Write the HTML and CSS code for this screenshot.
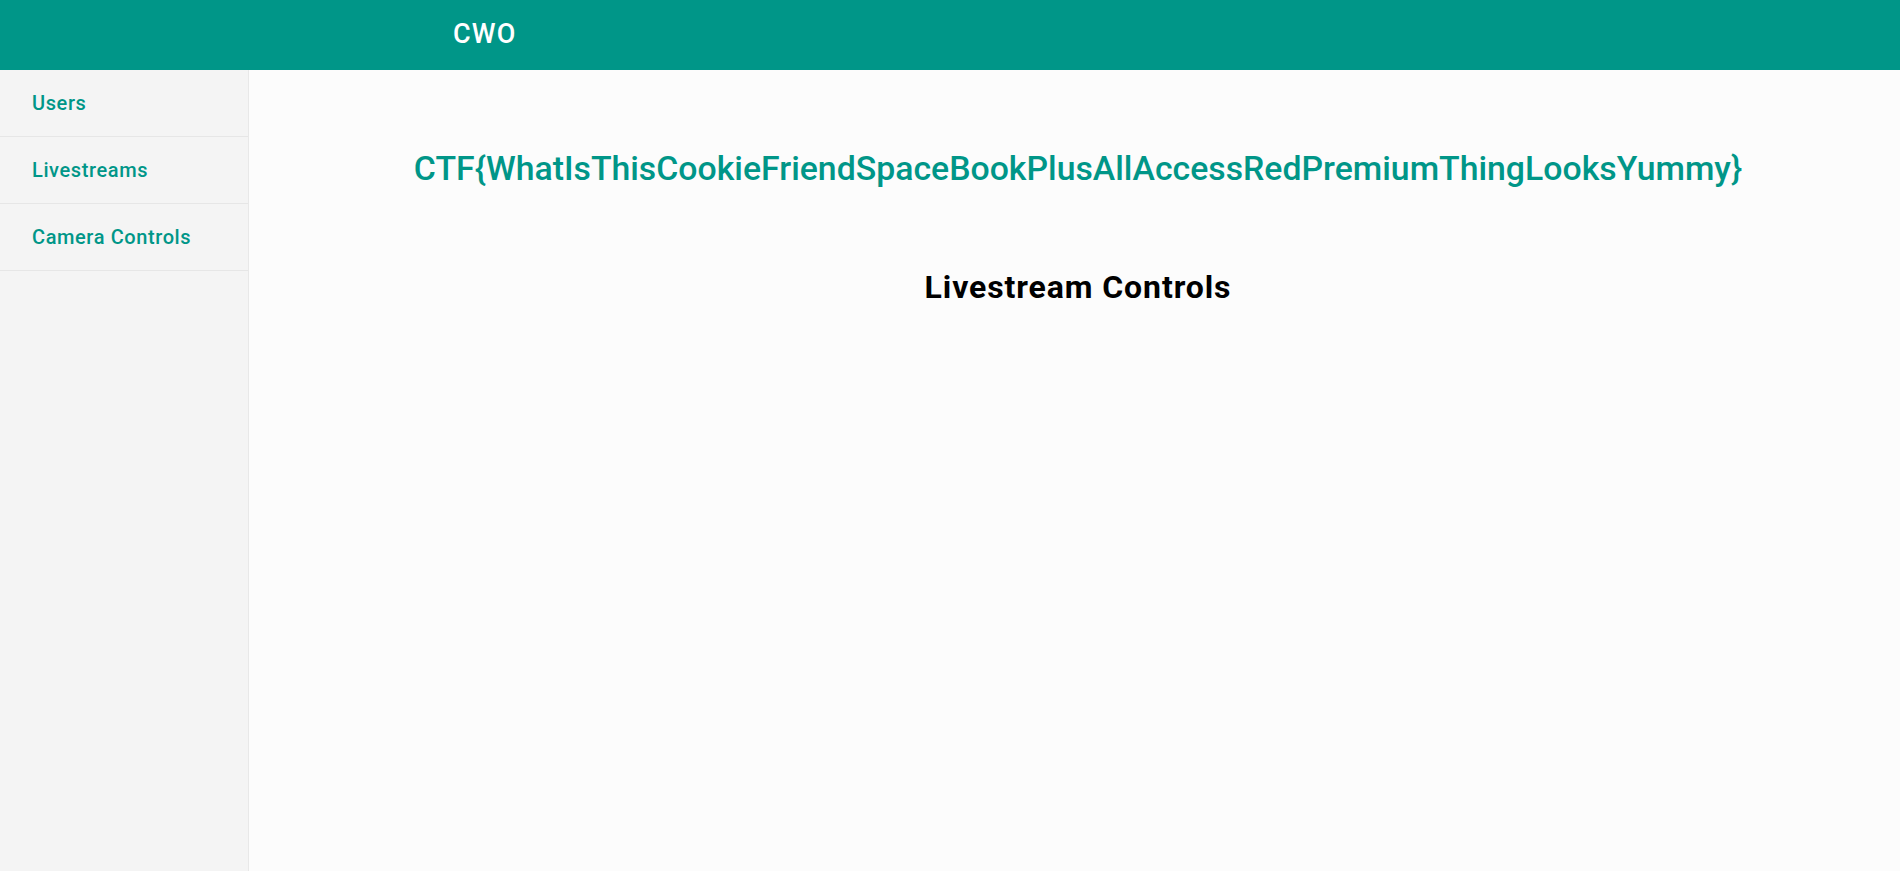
FILE: index.html
```html
<!DOCTYPE html>
<html>
<head>
<meta charset="utf-8">
<link rel="stylesheet" href="styles.css">
</head>
<body>
<header class="toolbar">
  <span class="brand">CWO</span>
</header>
<div class="layout">
  <nav class="sidenav">
    <a class="nav-item">Users</a>
    <a class="nav-item">Livestreams</a>
    <a class="nav-item">Camera Controls</a>
  </nav>
  <main class="content">
    <h2 class="flag">CTF{WhatIsThisCookieFriendSpaceBookPlusAllAccessRedPremiumThingLooksYummy}</h2>
    <h1 class="section-title">Livestream Controls</h1>
  </main>
</div>
</body>
</html>
```
FILE: styles.css
```css
html, body {
  margin: 0;
  padding: 0;
  height: 100%;
}
body {
  font-family: Roboto, "Liberation Sans", sans-serif;
  background: #fafafa;
  display: flex;
  flex-direction: column;
}
.toolbar {
  height: 70px;
  background: #009688;
  color: #ffffff;
  display: flex;
  align-items: center;
  padding-left: 453px;
  flex-shrink: 0;
}
.brand {
  font-size: 27px;
  font-weight: 500;
  letter-spacing: 1.2px;
  line-height: 1;
  padding-bottom: 1px;
}
.layout {
  flex: 1;
  display: flex;
}
.sidenav {
  width: 248px;
  background: #f4f4f4;
  border-right: 1px solid #e8e8e8;
  display: flex;
  flex-direction: column;
}
.nav-item {
  height: 66px;
  border-bottom: 1px solid #e6e6e6;
  display: flex;
  align-items: center;
  padding-left: 32px;
  color: #009688;
  font-size: 20px;
  font-weight: 500;
  letter-spacing: 0.6px;
}
.content {
  flex: 1;
  background: #fcfcfc;
  display: flex;
  flex-direction: column;
  align-items: center;
  padding-top: 61px;
  padding-left: 7px;
}
.flag {
  margin: 0;
  color: #009688;
  font-size: 33.8px;
  font-weight: 500;
  line-height: 76px;
}
.section-title {
  margin: 60px 0 0;
  color: #000000;
  font-size: 32px;
  font-weight: 700;
  letter-spacing: 0.9px;
  line-height: 40px;
}
```
